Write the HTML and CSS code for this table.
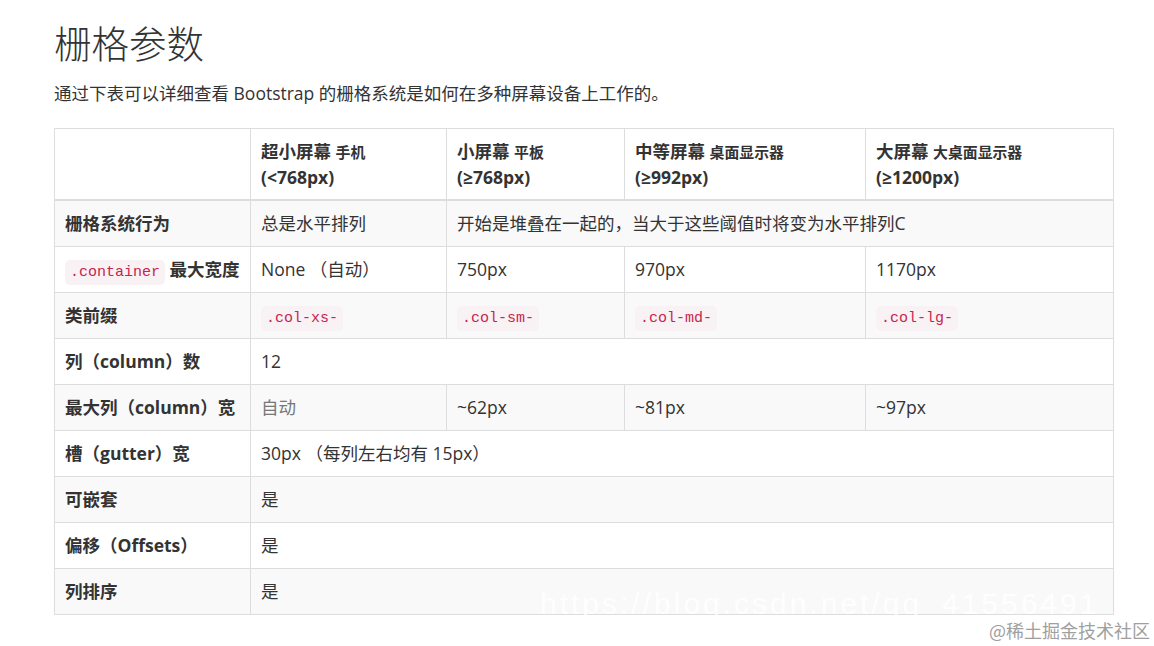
FILE: index.html
```html
<!DOCTYPE html>
<html lang="zh-CN">
<head>
<meta charset="utf-8">
<title>栅格参数</title>
<link rel="stylesheet" href="styles.css">
</head>
<body>
<main class="page">
  <h1 class="title">栅格参数</h1>
  <p class="lead">通过下表可以详细查看 Bootstrap 的栅格系统是如何在多种屏幕设备上工作的。</p>
  <table class="grid-table">
    <colgroup>
      <col class="c1"><col class="c2"><col class="c3"><col class="c4"><col class="c5">
    </colgroup>
    <thead>
      <tr>
        <th></th>
        <th>超小屏幕 <small>手机</small><br>(&lt;768px)</th>
        <th>小屏幕 <small>平板</small><br>(≥768px)</th>
        <th>中等屏幕 <small>桌面显示器</small><br>(≥992px)</th>
        <th>大屏幕 <small>大桌面显示器</small><br>(≥1200px)</th>
      </tr>
    </thead>
    <tbody>
      <tr>
        <th>栅格系统行为</th>
        <td>总是水平排列</td>
        <td colspan="3">开始是堆叠在一起的，当大于这些阈值时将变为水平排列C</td>
      </tr>
      <tr>
        <th><code>.container</code> 最大宽度</th>
        <td>None （自动）</td>
        <td>750px</td>
        <td>970px</td>
        <td>1170px</td>
      </tr>
      <tr>
        <th>类前缀</th>
        <td><code>.col-xs-</code></td>
        <td><code>.col-sm-</code></td>
        <td><code>.col-md-</code></td>
        <td><code>.col-lg-</code></td>
      </tr>
      <tr>
        <th>列（column）数</th>
        <td colspan="4">12</td>
      </tr>
      <tr>
        <th>最大列（column）宽</th>
        <td class="muted">自动</td>
        <td>~62px</td>
        <td>~81px</td>
        <td>~97px</td>
      </tr>
      <tr>
        <th>槽（gutter）宽</th>
        <td colspan="4">30px （每列左右均有 15px）</td>
      </tr>
      <tr>
        <th>可嵌套</th>
        <td colspan="4">是</td>
      </tr>
      <tr>
        <th>偏移（Offsets）</th>
        <td colspan="4">是</td>
      </tr>
      <tr>
        <th>列排序</th>
        <td colspan="4">是</td>
      </tr>
    </tbody>
  </table>
</main>
<div class="wm-url">https://blog.csdn.net/qq_41556491</div>
<div class="wm-brand">@稀土掘金技术社区</div>
</body>
</html>
```

FILE: styles.css
```css
html, body {
  margin: 0;
  padding: 0;
  background: #fff;
}
body {
  font-family: "Open Sans", "Noto Sans CJK SC", sans-serif;
  font-size: 17.5px;
  line-height: 25px;
  color: #333;
  position: relative;
  min-height: 646px;
  overflow: hidden;
}
.page {
  padding: 21px 41px 0 54px;
}
.title {
  margin: 0;
  font-family: "Noto Sans CJK SC", sans-serif;
  font-size: 37.5px;
  line-height: 41px;
  font-weight: 300;
  color: #333;
}
.lead {
  margin: 19px 0 22px;
  font-family: "Open Sans", "Noto Sans CJK SC", sans-serif;
  font-weight: 400;
}
.grid-table {
  border-collapse: collapse;
  border-spacing: 0;
  width: 1059px;
  table-layout: fixed;
  border: 1px solid #ddd;
}
.c1 { width: 196px; }
.c2 { width: 196px; }
.c3 { width: 178px; }
.c4 { width: 241px; }
.c5 { width: 248px; }
.grid-table th,
.grid-table td {
  border: 1px solid #ddd;
  padding: 10px;
  text-align: left;
  vertical-align: top;
  line-height: 25px;
  white-space: nowrap;
}
.grid-table th {
  font-weight: 700;
}
.grid-table thead th {
  border-bottom: 2px solid #ddd;
  vertical-align: bottom;
  padding-bottom: 9px;
}
.grid-table thead small {
  font-size: 85%;
  font-weight: 700;
}
.grid-table tbody tr:nth-child(odd) {
  background: #f9f9f9;
}
.grid-table td {
  font-weight: 400;
}
.muted {
  color: #777;
}
code {
  font-family: "Liberation Mono", "DejaVu Sans Mono", monospace;
  font-size: 15px;
  line-height: 1;
  font-weight: 400;
  padding: 4px 5px;
  color: #c7254e;
  background: #f9f2f4;
  border-radius: 5px;
}
.wm-url {
  position: absolute;
  left: 540px;
  top: 589px;
  font-family: "Liberation Sans", sans-serif;
  font-size: 30px;
  line-height: 30px;
  color: rgba(255, 255, 255, 0.9);
  letter-spacing: 3px;
  white-space: nowrap;
}
.wm-brand {
  position: absolute;
  left: 989px;
  top: 620px;
  font-family: "Noto Sans CJK SC", sans-serif;
  font-size: 18px;
  line-height: 20px;
  color: #a0a0a0;
  white-space: nowrap;
}
```
